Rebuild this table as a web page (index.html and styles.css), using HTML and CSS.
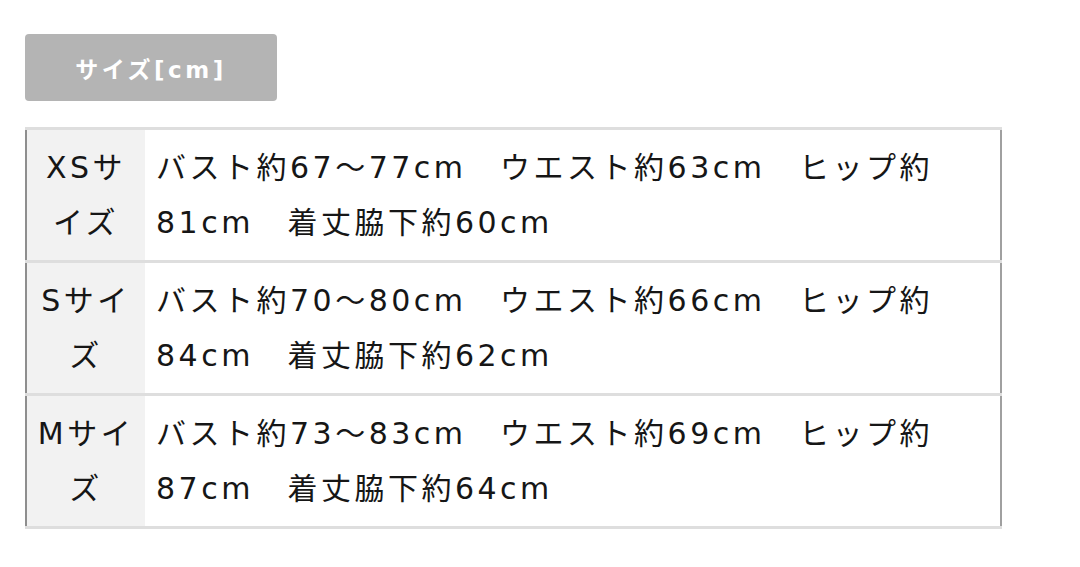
FILE: index.html
```html
<!DOCTYPE html>
<html lang="ja">
<head>
<meta charset="utf-8">
<link rel="stylesheet" href="styles.css">
</head>
<body>
<div class="page">
  <div class="tab">サイズ[cm]</div>
  <table class="size-table">
    <tr>
      <th>XSサイズ</th>
      <td>バスト約67～77cm　ウエスト約63cm　ヒップ約81cm　着丈脇下約60cm</td>
    </tr>
    <tr>
      <th>Sサイズ</th>
      <td>バスト約70～80cm　ウエスト約66cm　ヒップ約84cm　着丈脇下約62cm</td>
    </tr>
    <tr>
      <th>Mサイズ</th>
      <td>バスト約73～83cm　ウエスト約69cm　ヒップ約87cm　着丈脇下約64cm</td>
    </tr>
  </table>
</div>
</body>
</html>
```
FILE: styles.css
```css
html, body {
  margin: 0;
  padding: 0;
  background: #ffffff;
}
body {
  font-family: "DejaVu Sans", "Noto Sans CJK JP", sans-serif;
  color: #161616;
}
.page {
  padding: 34px 0 0 25px;
}
.tab {
  width: 252px;
  height: 67px;
  box-sizing: border-box;
  background: #b4b4b4;
  border-radius: 4px;
  color: #fff;
  font-weight: bold;
  font-size: 23px;
  letter-spacing: 3.5px;
  display: flex;
  align-items: center;
  justify-content: center;
}
.size-table {
  margin-top: 26px;
  width: 977px;
  border-collapse: collapse;
  border-left: 2px solid #8e8e8e;
  border-right: 2px solid #a0a0a0;
}
.size-table tr {
  border-top: 3px solid #dedede;
  border-bottom: 3px solid #dedede;
}
.size-table th,
.size-table td {
  font-size: 30px;
  font-weight: normal;
  letter-spacing: 3.5px;
  line-height: 55px;
  padding: 10px 10px 10px 11px;
  vertical-align: top;
}
.size-table th {
  width: 100px;
  padding-left: 9px;
  padding-right: 9px;
  background: #f2f2f2;
  text-align: center;
}
.size-table td {
  text-align: left;
}
```
